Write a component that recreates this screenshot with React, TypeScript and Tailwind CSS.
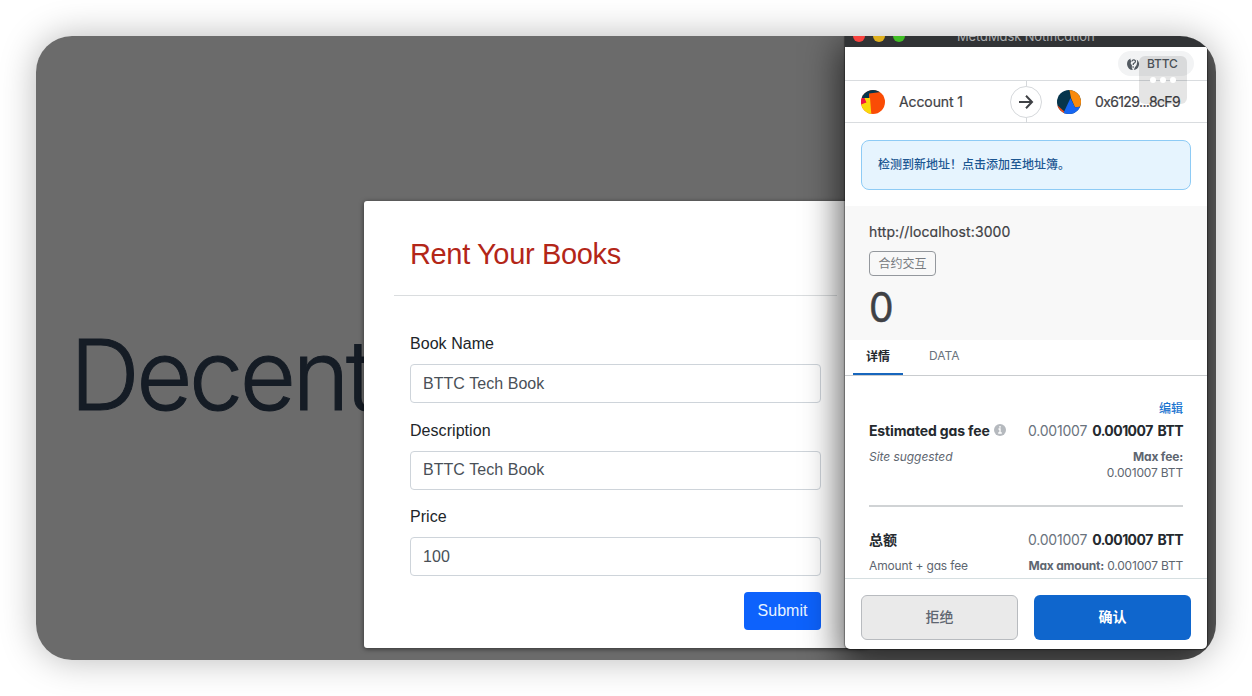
import React from "react";

const labels = [
  { label: "Book Name", value: "BTTC Tech Book" },
  { label: "Description", value: "BTTC Tech Book" },
  { label: "Price", value: "100" },
];

function BookModal() {
  return (
    <form className="absolute left-[328px] top-[165px] flex h-[447px] w-[503px] flex-col rounded-[3px] bg-white px-[30px] font-['Liberation_Sans',sans-serif] text-[#212529] shadow-[0_1px_5px_rgba(0,0,0,0.55)]">
      <h2 className="h-[95px] border-b border-[#dadddf] px-4 pt-[36px] text-[29px] leading-[34px] tracking-[-0.35px] text-[#b32618]">
        Rent Your Books
      </h2>
      <div className="flex flex-col px-4 pt-[36px]">
        {labels.map((f) => (
          <label key={f.label} className="flex h-[86.5px] flex-col text-[16px] leading-6 tracking-[0.05px]">
            <span>{f.label}</span>
            <span className="mt-[8px] flex h-[39px] items-center rounded-[4px] border border-[#ced4da] px-3 text-[#495057]">
              {f.value}
            </span>
          </label>
        ))}
        <button type="button" className="h-[38px] w-[77px] self-end rounded-[4px] bg-[#0d62fc] text-[16px] text-[#e8f3ff]">
          Submit
        </button>
      </div>
    </form>
  );
}

function Question() {
  return (
    <svg viewBox="0 0 12 12" className="h-3 w-3">
      <path d="M3.5.6A6 6 0 0 0 5.8 12L4.8 9.6 5 7.6 3.600 5.200 4.400 3.200 3.500 2Z" fill="#535a61" />
      <path d="M9.800 1.400A6 6 0 0 1 6.800 12L7.800 9.400 9.600 7 10.200 4Z" fill="#535a61" />
      <path d="M4.900 3.400Q5.400 1.700 7 1.900 8.900 2.300 8.300 4 7.800 5 6.400 5.600L6.200 7M6.100 8.300v1.400" fill="none" stroke="#535a61" strokeWidth="1.300" />
    </svg>
  );
}

function Amount() {
  return (
    <span className="flex gap-[5px] text-[14px] leading-5">
      <span className="tracking-[-0.2px] text-[#6a737d]">0.001007</span>
      <b className="tracking-[-0.55px] text-[#24292e] [word-spacing:2px]">0.001007 BTT</b>
    </span>
  );
}

function Wallet() {
  return (
    <div className="absolute left-[809px] top-0 flex h-[613px] w-[362px] flex-col rounded-b-[5px] bg-white font-['Inter','Noto_Sans_CJK_SC',sans-serif] text-[#3f4145] shadow-[0_0_1px_1px_rgba(0,0,0,0.35),0_12px_36px_5px_rgba(0,0,0,0.62)] [font-feature-settings:'cv11']">
      <div className="flex h-[11px] shrink-0 items-start overflow-hidden bg-[#313335]">
        <div className="-mt-[6px] flex gap-2 pl-2">
          <i className="h-3 w-3 rounded-full bg-[#f8433f]" />
          <i className="h-3 w-3 rounded-full bg-[#dfb01e]" />
          <i className="h-3 w-3 rounded-full bg-[#41be25]" />
        </div>
        <span className="-mt-[8px] ml-[52px] text-[13px] leading-4 tracking-[-0.12px] text-[#a9abad]">MetaMask Notification</span>
      </div>
      <div className="flex h-[34px] shrink-0 items-center justify-end border-b border-[#d9dcdf] pr-[13px]">
        <div className="flex h-[25px] w-[76px] items-center gap-[8px] rounded-full bg-[#f2f3f4] pl-[9px] text-[12px] font-medium tracking-[-0.15px] text-[#535a61]">
          <Question />
          <span>BTTC</span>
        </div>
      </div>
      <div className="flex h-[42px] shrink-0 items-center border-b border-[#d9dcdf] pl-4 text-[14px]">
        <svg viewBox="0 0 24 24" className="h-6 w-6">
          <clipPath id="a1"><circle cx="12" cy="12" r="12" /></clipPath>
          <g clipPath="url(#a1)">
            <path d="M0 0h24v24H0z" fill="#fa4c05" />
            <path d="M0 0h20v2L8 3.500V8H0z" fill="#06354c" />
            <path d="M0 8h3.500l2 4.500L0 15z" fill="#ef1642" />
            <path d="M3.500 8H9l1.300 16H0V14.500l5.500-2z" fill="#f9d90b" />
          </g>
        </svg>
        <span className="ml-[14px] w-[111px] tracking-[-0.1px] [-webkit-text-stroke:0.2px]">Account 1</span>
        <span className="flex h-[42px] w-8 flex-col items-center">
          <i className="h-[5px] w-px bg-[#d5d8db]" />
          <span className="flex h-8 w-8 items-center justify-center rounded-full border border-[#d5d8db]">
            <svg viewBox="0 0 16 16" className="h-4 w-4" fill="none" stroke="#3f4145" strokeWidth="2">
              <path d="M1 8h13M8 1.800 14 8l-6 6.200" />
            </svg>
          </span>
          <i className="h-[5px] w-px bg-[#d5d8db]" />
        </span>
        <svg viewBox="0 0 24 24" className="ml-[15px] h-6 w-6">
          <clipPath id="a2"><circle cx="12" cy="12" r="12" /></clipPath>
          <g clipPath="url(#a2)">
            <path d="M0 0h24v24H0z" fill="#06354c" />
            <path d="m12.500 0 1.500 8 4 9.500 6-1V0z" fill="#f98a0c" />
            <path d="m0 15 9 8-2 1H0z" fill="#f04a18" />
            <path d="m13.500 8 4.500 9.500 6-1V24H6z" fill="#1665f2" />
          </g>
        </svg>
        <span className="ml-[14px] tracking-[-0.62px] [-webkit-text-stroke:0.2px]">0x6129...8cF9</span>
      </div>
      <div className="mx-4 mt-[17px] flex h-[50px] shrink-0 items-center rounded-[8px] border-[1.5px] border-[#8ecbf5] bg-[#e6f4fe] px-4 text-[12px] font-medium text-[#1c5792]">
        检测到新地址！点击添加至地址簿。
      </div>
      <div className="mt-4 flex h-[134px] shrink-0 flex-col items-start bg-[#f8f8f8] px-6 pt-4">
        <span className="text-[14px] leading-5 tracking-[0.1px] [-webkit-text-stroke:0.2px]">http://localhost:3000</span>
        <span className="mt-[9px] flex h-[25px] w-[67px] items-center justify-center rounded-[4px] border border-[#94989d] text-[12px] text-[#777b80]">合约交互</span>
        <span className="mt-[8px] text-[41px] leading-[46px]">
          <span className="inline-block origin-left scale-x-95 [-webkit-text-stroke:0.5px]">0</span>
        </span>
      </div>
      <div className="flex h-[36px] shrink-0 border-b border-[#c9cccf] pl-2 text-[12px]">
        <span className="flex h-[35px] w-[50px] justify-center border-b-2 border-[#1766bd] pt-[8px] font-bold leading-[18px] text-[#24292e]">详情</span>
        <span className="ml-[26px] pt-[7px] leading-[18px] text-[#6a737d]">DATA</span>
      </div>
      <div className="flex h-[202px] shrink-0 flex-col overflow-hidden px-6 pt-[25px] text-[12px] leading-4 text-[#5e6670]">
        <span className="self-end font-medium text-[#1b74cf]">编辑</span>
        <div className="mt-[4px] flex items-center justify-between">
          <span className="flex items-center text-[14px] font-bold leading-5 tracking-[-0.15px] text-[#24292e]">
            Estimated gas fee
            <svg viewBox="0 0 12 12" className="-mt-[2px] ml-[4px] h-3 w-3">
              <circle cx="6" cy="6" r="6" fill="#b5b9be" />
              <path d="M6 2v1.700M4.500 5H6v4M4.200 9h3.600" stroke="#fff" strokeWidth="1.300" fill="none" />
            </svg>
          </span>
          <Amount />
        </div>
        <div className="mt-[8px] flex justify-between">
          <i className="tracking-[-0.05px]">Site suggested</i>
          <span className="text-right tracking-[-0.17px]"><b>Max fee:</b><br />0.001007 BTT</span>
        </div>
        <div className="mt-[24px] border-t-2 border-[#d0d3d5]" />
        <div className="mt-[23px] flex items-center justify-between">
          <b className="text-[14px] leading-5 text-[#24292e]">总额</b>
          <Amount />
        </div>
        <div className="mt-[8px] flex justify-between">
          <span className="tracking-[-0.15px]">Amount + gas fee</span>
          <span className="tracking-[-0.2px]"><b>Max amount:</b> 0.001007 BTT</span>
        </div>
      </div>
      <div className="flex h-[72px] shrink-0 gap-4 border-t border-[#d6dfe1] px-4 pt-4 text-[14px]">
        <button className="h-[45px] w-[157px] rounded-[6px] border border-[#b8bbbf] bg-[#eaeaea] pb-[3px] font-medium text-[#5e6670]">拒绝</button>
        <button className="h-[45px] w-[157px] rounded-[6px] bg-[#0f66cd] pb-[3px] font-bold text-white">确认</button>
      </div>
    </div>
  );
}

export default function App() {
  return (
    <main className="h-[696px] w-[1252px] overflow-hidden bg-white p-9">
      <div className="h-[624px] w-[1180px] rounded-[36px] shadow-[0_0_36px_rgba(0,0,0,0.28)]">
        <div className="relative h-full w-full overflow-hidden rounded-[36px] bg-[#6b6b6b]">
          <h1 className="whitespace-nowrap pl-[34px] pt-[280px] font-['Inter',sans-serif] text-[97px] font-light leading-[118px] tracking-[-3.5px] text-[#151c25] [-webkit-text-stroke:1px]">Decent</h1>
          <BookModal />
          <Wallet />
          <div className="absolute left-[1103px] top-[20px] flex h-12 w-12 items-center justify-center gap-1 rounded-[6px] bg-black/10">
            <i className="h-[6px] w-[6px] rounded-full bg-white" />
            <i className="h-[6px] w-[6px] rounded-full bg-white" />
            <i className="h-[6px] w-[6px] rounded-full bg-white" />
          </div>
        </div>
      </div>
    </main>
  );
}
